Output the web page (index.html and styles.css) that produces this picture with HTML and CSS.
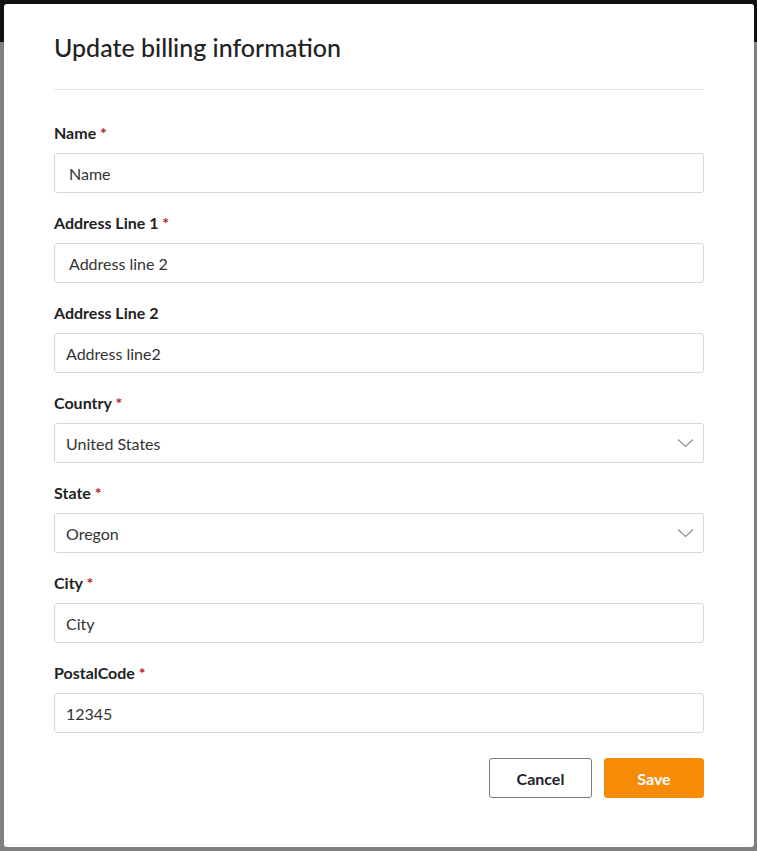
FILE: index.html
```html
<!DOCTYPE html>
<html lang="en">
<head>
<meta charset="utf-8">
<title>Update billing information</title>
<link rel="stylesheet" href="styles.css">
</head>
<body>
<div class="backdrop">
  <div class="topbar"></div>
  <div class="rest"></div>
</div>
<div class="modal">
  <div class="modal-header">
    <h1 class="modal-title">Update billing information</h1>
  </div>
  <form class="form">
    <div class="field">
      <label class="label">Name <span class="req">*</span></label>
      <div class="input pad-wide">Name</div>
    </div>
    <div class="field">
      <label class="label">Address Line 1 <span class="req">*</span></label>
      <div class="input pad-wide">Address line 2</div>
    </div>
    <div class="field">
      <label class="label">Address Line 2</label>
      <div class="input">Address line2</div>
    </div>
    <div class="field">
      <label class="label">Country <span class="req">*</span></label>
      <div class="input select"><span>United States</span>
        <svg class="chev" width="17" height="10" viewBox="0 0 17 10"><path d="M1 1.5 L8.5 8.5 L16 1.5" fill="none" stroke="#8a8a8a" stroke-width="1.1"/></svg>
      </div>
    </div>
    <div class="field">
      <label class="label">State <span class="req">*</span></label>
      <div class="input select"><span>Oregon</span>
        <svg class="chev" width="17" height="10" viewBox="0 0 17 10"><path d="M1 1.5 L8.5 8.5 L16 1.5" fill="none" stroke="#8a8a8a" stroke-width="1.1"/></svg>
      </div>
    </div>
    <div class="field">
      <label class="label">City <span class="req">*</span></label>
      <div class="input">City</div>
    </div>
    <div class="field">
      <label class="label">PostalCode <span class="req">*</span></label>
      <div class="input">12345</div>
    </div>
    <div class="actions">
      <button type="button" class="btn btn-cancel">Cancel</button>
      <button type="button" class="btn btn-save">Save</button>
    </div>
  </form>
</div>
</body>
</html>
```
FILE: styles.css
```css
html, body {
  margin: 0;
  padding: 0;
  height: 100%;
}
body {
  font-family: "Lato", "Open Sans", sans-serif;
  background: #808080;
  overflow: hidden;
}
.backdrop {
  display: flex;
  flex-direction: column;
  height: 100%;
}
.topbar {
  height: 42px;
  background: #101010;
}
.rest {
  flex: 1;
  background: #808080;
}
.modal {
  position: absolute;
  left: 4px;
  top: 4px;
  width: 750px;
  height: 843px;
  box-sizing: border-box;
  background: #fff;
  border-radius: 3px;
  padding: 0 50px;
}
.modal-header {
  padding-top: 28px;
  padding-bottom: 27px;
  border-bottom: 1px solid #e8e8e8;
}
.modal-title {
  margin: 0;
  font-size: 25px;
  line-height: 30px;
  font-weight: 500;
  color: #222;
}
.form {
  display: flex;
  flex-direction: column;
  padding-top: 33px;
}
.field {
  display: flex;
  flex-direction: column;
  margin-bottom: 20px;
}
.label {
  font-size: 16px;
  line-height: 20px;
  font-weight: 700;
  color: #222;
  margin-bottom: 10px;
}
.req {
  color: #b4232c;
  font-weight: 700;
}
.input {
  height: 40px;
  box-sizing: border-box;
  border: 1px solid #d6d6de;
  border-radius: 3px;
  padding: 0 11px;
  display: flex;
  align-items: center;
  font-size: 16px;
  color: #333;
}
.pad-wide {
  padding-left: 14px;
}
.select {
  justify-content: space-between;
  padding-right: 9px;
}
.chev {
  display: block;
}
.actions {
  display: flex;
  justify-content: flex-end;
  gap: 12px;
  margin-top: 5px;
}
.btn {
  height: 40px;
  border-radius: 3px;
  font-family: inherit;
  font-size: 16px;
  font-weight: 700;
  cursor: pointer;
}
.btn-cancel {
  width: 103px;
  background: #fff;
  border: 1px solid #7a7a7a;
  color: #1e1e2e;
}
.btn-save {
  width: 100px;
  background: #f68b08;
  border: 1px solid #f68b08;
  color: #fff;
}
```
